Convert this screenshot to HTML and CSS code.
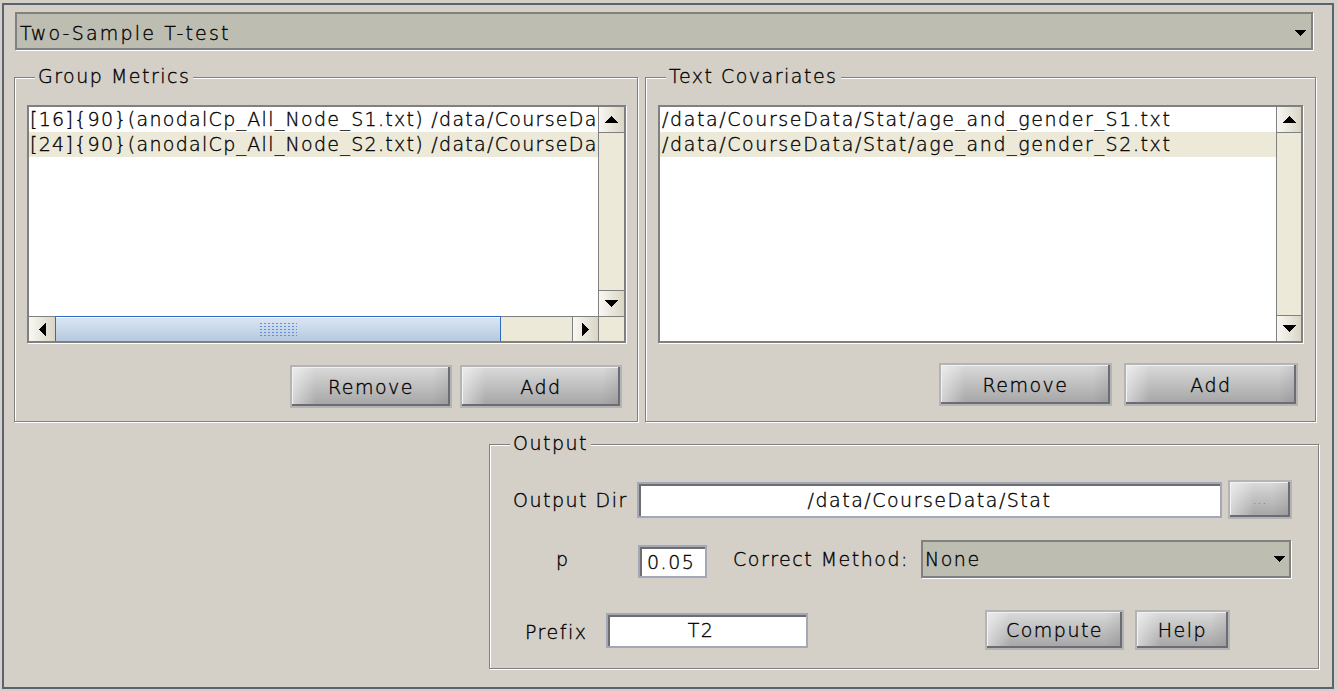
FILE: index.html
```html
<!DOCTYPE html>
<html>
<head>
<meta charset="utf-8">
<title>Two-Sample T-test</title>
<link rel="stylesheet" href="styles.css">
</head>
<body>
<div class="frame">
  <div class="combo combo-test">
    <span class="combo-text combo-title">Two-Sample T-test</span>
    <svg class="combo-arrow" width="12" height="6" viewBox="0 0 12 6"><path d="M0 0H12L6 6Z"/></svg>
  </div>

  <div class="groups">
    <fieldset class="group group-metrics">
      <legend>Group Metrics</legend>
      <div class="list list-metrics">
        <div class="rows">
          <div class="row row-metrics">[16]{90}(anodalCp_All_Node_S1.txt) /data/CourseDa</div>
          <div class="row row-metrics row-alt">[24]{90}(anodalCp_All_Node_S2.txt) /data/CourseDa</div>
        </div>
        <div class="vscroll">
          <div class="sb-btn sb-up"><svg width="13" height="7" viewBox="0 0 13 7"><path d="M6.5 0L13 7H0Z"/></svg></div>
          <div class="sb-track"></div>
          <div class="sb-btn sb-down"><svg width="13" height="7" viewBox="0 0 13 7"><path d="M0 0H13L6.5 7Z"/></svg></div>
        </div>
        <div class="hscroll">
          <div class="sb-btn sb-left"><svg width="7" height="13" viewBox="0 0 7 13"><path d="M0 6.5L7 0V13Z"/></svg></div>
          <div class="sb-thumb"><span class="grip"></span></div>
          <div class="sb-htrack"></div>
          <div class="sb-btn sb-right"><svg width="7" height="13" viewBox="0 0 7 13"><path d="M7 6.5L0 0V13Z"/></svg></div>
        </div>
        <div class="corner"></div>
      </div>
      <div class="btn-row btn-row-metrics">
        <button class="btn btn-metrics">Remove</button>
        <button class="btn btn-metrics">Add</button>
      </div>
    </fieldset>

    <fieldset class="group group-cov">
      <legend>Text Covariates</legend>
      <div class="list list-cov">
        <div class="rows">
          <div class="row row-cov">/data/CourseData/Stat/age_and_gender_S1.txt</div>
          <div class="row row-cov row-alt">/data/CourseData/Stat/age_and_gender_S2.txt</div>
        </div>
        <div class="vscroll">
          <div class="sb-btn sb-up"><svg width="13" height="7" viewBox="0 0 13 7"><path d="M6.5 0L13 7H0Z"/></svg></div>
          <div class="sb-track"></div>
          <div class="sb-btn sb-down"><svg width="13" height="7" viewBox="0 0 13 7"><path d="M0 0H13L6.5 7Z"/></svg></div>
        </div>
      </div>
      <div class="btn-row btn-row-cov">
        <button class="btn btn-cov-remove">Remove</button>
        <button class="btn btn-cov-add">Add</button>
      </div>
    </fieldset>
  </div>

  <fieldset class="group output">
    <legend>Output</legend>
    <div class="out-row r1">
      <span class="lbl lbl-dir">Output Dir</span>
      <div class="field field-dir">/data/CourseData/Stat</div>
      <button class="btn btn-browse">...</button>
    </div>
    <div class="out-row r2">
      <span class="lbl lbl-p">p</span>
      <div class="field field-p">0.05</div>
      <span class="lbl lbl-method">Correct Method:</span>
      <div class="combo combo-method">
        <span class="combo-text">None</span>
        <svg class="combo-arrow" width="12" height="6" viewBox="0 0 12 6"><path d="M0 0H12L6 6Z"/></svg>
      </div>
    </div>
    <div class="out-row r3">
      <span class="lbl lbl-prefix">Prefix</span>
      <div class="field field-prefix">T2</div>
      <button class="btn btn-compute">Compute</button>
      <button class="btn btn-help">Help</button>
    </div>
  </fieldset>
</div>
</body>
</html>
```
FILE: styles.css
```css
html, body {
  margin: 0;
  background: #d4d0c8;
}
body {
  font-family: "DejaVu Sans", sans-serif;
  font-size: 19px;
  font-weight: 300;
  letter-spacing: 1.5px;
  color: #000;
  -webkit-text-stroke: 0.35px #000;
}
.frame {
  margin: 3px 0 0 2px;
  width: 1332px;
  height: 686px;
  box-sizing: border-box;
  border: 2px solid #5b6270;
  padding: 7px 0 0 10px;
}

/* combo boxes */
.combo {
  box-sizing: border-box;
  border: 2px solid #808080;
  box-shadow: 1px 1px 0 #fff;
  background: #bdbeb1;
  display: flex;
  align-items: center;
  justify-content: space-between;
}
.combo-text {
  line-height: 22px;
  white-space: nowrap;
}
.combo-title {
  letter-spacing: 2.2px;
}
.combo-arrow {
  display: block;
  shape-rendering: crispEdges;
}
.combo-test {
  margin-left: 1px;
  width: 1298px;
  height: 38px;
  padding: 3px 5px 0 3px;
}
.combo-method {
  width: 370px;
  height: 38px;
  padding: 0 4px 0 2px;
}

/* group boxes */
.groups {
  display: flex;
  gap: 7px;
  margin-top: 15px;
}
.group {
  margin: 0;
  min-inline-size: 0;
  box-sizing: border-box;
  border: 1px solid #808080;
  box-shadow: inset 1px 1px 0 #fff, 1px 1px 0 #fff;
}
.group legend {
  padding: 0 3px 3px;
  margin-left: 8px;
  line-height: 22px;
  background: #d4d0c8;
}
.group-metrics {
  width: 624px;
  padding: 15px 11px 13px 12px;
}
.group-cov {
  width: 671px;
  padding: 15px 12px 15px 12px;
}

/* lists */
.list {
  box-sizing: border-box;
  height: 238px;
  border: 2px solid #808080;
  box-shadow: 1px 1px 0 #fff;
  background: #fff;
  display: grid;
  overflow: hidden;
}
.list-metrics {
  width: 599px;
  grid-template-columns: 1fr 26px;
  grid-template-rows: 1fr 25px;
}
.list-cov {
  width: 645px;
  grid-template-columns: 1fr 25px;
}
.rows {
  overflow: hidden;
  min-width: 0;
}
.row {
  height: 25px;
  line-height: 25px;
  white-space: nowrap;
  padding-left: 1px;
}
.row-metrics {
  letter-spacing: 1.3px;
}
.row-cov {
  padding-left: 2px;
  letter-spacing: 1.6px;
}
.row-alt {
  background: #ece9d8;
}

/* scrollbars */
.vscroll {
  display: flex;
  flex-direction: column;
  border-left: 1px solid #808080;
  background: #ece9d8;
}
.sb-btn {
  flex: none;
  box-sizing: border-box;
  display: flex;
  align-items: center;
  justify-content: center;
  background: linear-gradient(to right, #f8f7f2, #dad6c6);
}
.sb-btn svg {
  display: block;
  shape-rendering: crispEdges;
}
.sb-up {
  height: 26px;
  border-bottom: 1px solid #808080;
}
.sb-down {
  height: 26px;
  border-top: 1px solid #808080;
}
.sb-track {
  flex: 1;
}
.hscroll {
  display: flex;
  background: #ece9d8;
}
.sb-left {
  width: 26px;
  border-top: 1px solid #808080;
}
.sb-right {
  width: 26px;
  border-top: 1px solid #808080;
  border-left: 1px solid #808080;
}
.sb-thumb {
  flex: none;
  width: 446px;
  box-sizing: border-box;
  border: 1px solid #316ac5;
  border-bottom: none;
  background: linear-gradient(#dbe6f3, #b6c9df);
  box-shadow: inset 0 1px 0 #fff;
  display: flex;
  align-items: center;
  justify-content: center;
}
.grip {
  width: 38px;
  height: 14px;
  background: radial-gradient(circle, #3d72d0 0.7px, transparent 1.1px) 0 0 / 4px 3px;
  opacity: 0.75;
}
.sb-htrack {
  flex: 1;
  border-top: 1px solid #808080;
}
.corner {
  background: #ece9d8;
  border-left: 1px solid #808080;
  border-top: 1px solid #808080;
}

/* buttons */
.btn-row {
  display: flex;
  justify-content: flex-end;
}
.btn-row-metrics {
  margin-top: 22px;
  gap: 8px;
  padding-right: 4px;
}
.btn-row-cov {
  margin-top: 20px;
  gap: 12px;
  padding-right: 5px;
}
.btn {
  font: inherit;
  letter-spacing: inherit;
  color: #000;
  box-sizing: border-box;
  height: 43px;
  padding: 0;
  border: 2px solid #b4b4b4;
  background:
    linear-gradient(to right, rgba(255,255,255,0.5), rgba(255,255,255,0) 24px),
    linear-gradient(to left, rgba(0,0,0,0.08), rgba(0,0,0,0) 18px),
    linear-gradient(#dadada, #a4a4a4);
  box-shadow: inset -2px -2px 0 #6c6c74, inset 1px 1px 0 #f2f2f2;
  line-height: 22px;
}
.btn-metrics { width: 162px; }
.btn-cov-remove { width: 173px; }
.btn-cov-add { width: 174px; }

/* output */
.output {
  width: 830px;
  margin: 10px 0 0 475px;
  padding: 23px 26px 18px 12px;
}
.out-row {
  display: flex;
  align-items: center;
}
.r1 { height: 39px; }
.r2 { height: 38px; margin-top: 21px; }
.r3 { height: 40px; margin-top: 32px; }
.lbl {
  box-sizing: border-box;
  line-height: 22px;
  white-space: nowrap;
}
.lbl-dir {
  width: 135px;
  padding-left: 11px;
}
.lbl-p {
  width: 136px;
  padding-left: 54px;
}
.lbl-method {
  width: 214px;
  padding-left: 26px;
}
.lbl-prefix {
  width: 104px;
  padding-left: 23px;
  padding-top: 4px;
}
.field {
  box-sizing: border-box;
  background: #fff;
  border: 2px solid #a3a8b6;
  box-shadow: inset 2px 2px 0 #6d6d72;
  display: flex;
  align-items: center;
  line-height: 22px;
  white-space: nowrap;
}
.field-dir {
  width: 585px;
  height: 36px;
  justify-content: center;
}
.field-p {
  width: 69px;
  height: 33px;
  align-self: flex-end;
  padding-left: 7px;
}
.field-prefix {
  width: 202px;
  height: 35px;
  justify-content: center;
  padding-right: 12px;
}
.btn-browse {
  margin-left: auto;
  width: 64px;
  height: 39px;
  font-size: 12px;
  color: #444;
  letter-spacing: 1px;
  -webkit-text-stroke: 0;
}
.btn-compute {
  margin-left: 177px;
  width: 139px;
  height: 40px;
}
.btn-help {
  margin-left: 11px;
  width: 95px;
  height: 40px;
}
```
